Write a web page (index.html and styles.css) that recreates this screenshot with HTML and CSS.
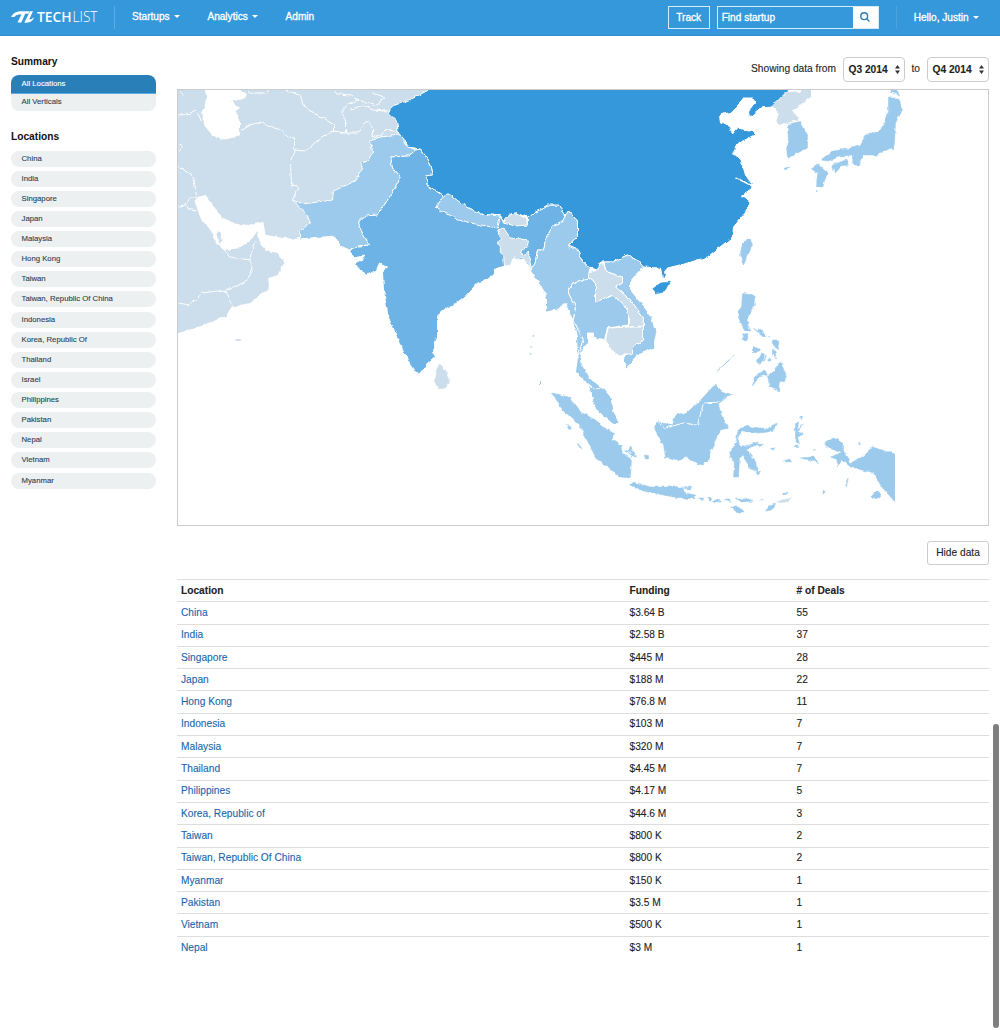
FILE: index.html
```html
<!DOCTYPE html>
<html lang="en">
<head>
<meta charset="utf-8">
<title>TechList – Locations</title>
<link rel="stylesheet" href="styles.css">
</head>
<body>
<header class="navbar">
  <svg class="logo" width="88" height="22" viewBox="0 -3 88 22">
    <path d="M0 8C2.500 3.500 5.500 2.200 11 2.200H18.500L17.300 4.800H14.200L10.300 13.500H6.500L10.500 5.200C6.500 5.200 4.500 6.200 3.500 8ZM19 2.200H22L18.300 10.300C20.200 10.200 21.800 9.500 23.200 8.200C21.500 12.500 18.500 13.800 13.300 13.800Z"/>
    <text class="logo-bold" x="26" y="12.700" textLength="34.500" lengthAdjust="spacingAndGlyphs">TECH</text>
    <text class="logo-light" x="61.500" y="12.700" textLength="25" lengthAdjust="spacingAndGlyphs">LIST</text>
  </svg>
  <nav class="menu">
    <a>Startups <i class="caret"></i></a>
    <a>Analytics <i class="caret"></i></a>
    <a>Admin</a>
  </nav>
  <a class="track">Track</a>
  <div class="search">
    <span class="search-field">Find startup</span>
    <span class="search-button"><svg width="10" height="10" viewBox="0 0 10 10"><circle cx="4.200" cy="4.200" r="3.400"/><path d="M6.600 6.600L9.400 9.400"/></svg></span>
  </div>
  <a class="user">Hello, Justin <i class="caret"></i></a>
</header>

<div class="page">
  <aside class="sidebar">
    <h2>Summary</h2>
    <ul class="summary">
      <li class="active">All Locations</li>
      <li>All Verticals</li>
    </ul>
    <h2>Locations</h2>
    <ul class="locations">
      <li>China</li><li>India</li><li>Singapore</li><li>Japan</li><li>Malaysia</li><li>Hong Kong</li><li>Taiwan</li><li>Taiwan, Republic Of China</li><li>Indonesia</li><li>Korea, Republic Of</li><li>Thailand</li><li>Israel</li><li>Philippines</li><li>Pakistan</li><li>Nepal</li><li>Vietnam</li><li>Myanmar</li>
    </ul>
  </aside>

  <main class="content">
    <div class="range">
      <span>Showing data from</span>
      <span class="select">Q3 2014 <svg width="5" height="9" viewBox="0 0 5 9"><path d="M2.500 0L5 3.500H0ZM2.500 9L5 5.500H0Z"/></svg></span>
      <span>to</span>
      <span class="select">Q4 2014 <svg width="5" height="9" viewBox="0 0 5 9"><path d="M2.500 0L5 3.500H0ZM2.500 9L5 5.500H0Z"/></svg></span>
    </div>

    <div class="map">
      <svg width="810" height="435" viewBox="178 90 810 435">
        <defs>
          <filter id="coast" filterUnits="userSpaceOnUse" x="160" y="70" width="840" height="470" color-interpolation-filters="sRGB">
            <feTurbulence type="fractalNoise" baseFrequency="0.18" numOctaves="2" seed="4" result="n"/>
            <feDisplacementMap in="SourceGraphic" in2="n" scale="4" xChannelSelector="R" yChannelSelector="G"/>
            <feGaussianBlur stdDeviation="0.3"/>
          </filter>
          <clipPath id="extent"><path d="M178 90H895V525H178Z M895 90H910V440H895Z"/></clipPath>
        </defs>
        <g clip-path="url(#extent)"><g filter="url(#coast)" transform="translate(0.5 0)">
          <!-- central and western Asia -->
          <path class="none flat" d="M170 80H440L415 150L297 239L284 238L265 235L263 223L257 222L247 226L232 223L220 216L213 205L205 195L197 197L194 201L200 218L210 230L215 243L224 250L240 248L252 238L257 231L259 243L265 250L277 253L284 262L277 275L269 278L268 288L257 296L249 303L232 307L226 316L200 326L192 329L178 333H170Z"/>
          <path class="water" d="M204 85L207 100L202 111L204 125L212 135L224 139L239 136L239 120L235 111L238 109L231 101L236 100L244 98L246 94L240 91V85Z"/>
          <path class="water" d="M212 232L217 231L219 236L217 243L213 237Z"/>
          <path class="none flat" d="M216 233L220 232L221 240L218 244Z"/>
          <path class="border" d="M292 200L298 186L291 185L290 161L294 150L294 138L289 137L280 130L260 122L250 125L240 131M294 150L305 151L320 138L334 131L345 133L357 133L367 121L372 128L372 138L387 130L400 132M285 90L299 95L305 108L334 125V131M345 133V120L341 112L350 103L357 100L377 105L384 97L372 93M335 90L337 94L350 95L357 100M350 110L364 106L372 110L388 111M178 116L190 113L195 110L202 121M179 92L183 96M248 90L249 93H266L268 90M178 166L192 176L197 196M178 206L185 205L190 197L197 197M185 205L187 209L196 211M224 250L229 257L249 260L252 248L255 240M249 260L252 265L247 281L225 290L202 293L189 305L178 303M225 290L232 307M178 145L182 147L178 152"/>

          <path class="low" d="M292 200L302 204L332 200L333 191L344 186L355 181L362 168L360 163L368 161L372 151L370 141L379 137L400 135L405 145L415 150L408 156L390 157L392 168L400 178L393 191L383 206L377 215L364 216L357 223L362 233L369 245L357 246L349 250L340 246L334 236L299 239L299 231L310 223L305 213Z"/>
          <path class="mid" d="M415 150L420 149L428 160L432 175L425 176L427 185L443 196L463 205L480 214L500 216L503 223L527 225L527 217L547 205L558 205L565 215L563 221L552 226L545 240L543 250L537 250L535 261L531 270L523 260L513 258L505 266L497 268L487 280L477 283L465 296L452 306L443 310L437 316L437 336L433 348L434 357L427 363L422 370L417 373L412 370L408 360L398 342L387 313L383 290L382 272L387 268L379 263L376 270L367 275L359 270L354 263L362 260L364 256L354 258L349 251L357 246L369 245L362 233L357 223L364 216L377 215L383 206L393 191L400 178L392 168L390 157L408 156Z"/>
          <path class="high" d="M430 80L428 90L413 98L403 102L392 106L388 113L396 121L398 133L405 141L407 147L420 149L428 160L432 175L425 176L427 185L443 196L463 205L480 214L500 216L504 221L508 215L515 213L527 217L547 205L558 205L565 215L568 211L577 221L577 235L568 246L577 250L582 261L589 268L597 270L602 262L612 262L627 255L637 260L642 267L660 268L662 278L665 275L664 272L667 268L687 263L707 257L722 245L732 237L733 227L743 215L750 202L742 195L750 191L752 185L745 175L740 158L732 154L738 143L755 135L755 131L737 128L732 134L728 125L720 122L719 115L732 112L743 98L753 98L754 102L748 112L749 117L760 108L772 107L788 92V80Z"/>
          <path class="water-line" d="M735 178L742 181L752 186M741 197L751 193"/>
          <path class="high isle" d="M652 289L660 283L669 282L664 292L655 294Z"/>
          <path class="none" d="M788 90L800 92V80H811V97L793 110L799 120L788 123L780 126L775 122L778 113L771 107Z"/>
          <path class="low isle" d="M788 124L800 121.500L807 135L807 148L797 153L787 158L786 148L788 138L787 128ZM784 168L789 167L788 169.500H784Z"/>
          <path class="low isle" d="M821 160L833 151L852 148L860 145L865 135L880 130L888 113L888 98L898 98L902 110L895 123L894 142L893 150L890 148L878 155L863 155L857 166L852 163L853 155L840 156L828 161ZM832 165L845 160L848 165L840 166L834 173ZM811 169L818 164L827 172L822 187L816 186L817 173ZM889 92L891 89L896 91L899 95Z"/>
          <path class="low isle" d="M750 239L752 245L743 265L739 255L743 243Z"/>

          <path class="low" d="M445 195L450 195L463 205L480 214L500 216L497 228L480 225L458 220L436 208L440 200Z"/>
          <path class="none" d="M503 223L508 215L515 213L526 219L527 225L514 226Z"/>
          <path class="none" d="M497 230L503 228L510 238L528 240L527 246L520 251L523 256L528 251L531 271L525 261L521 257L515 261L514 255L510 265L504 266L503 255L497 243L501 239Z"/>
          <path class="low" d="M568 211L577 221L577 235L568 246L577 250L582 261L589 268L588 278L572 283L568 293L575 307L573 320L583 340L577 357L576 337L572 320L565 302L557 310L545 312L545 295L540 285L530 271L535 261L537 250L543 250L545 240L552 226L563 221L565 215Z"/>
          <path class="low" d="M602 262L612 262L627 255L637 260L643 267L637 273L630 281L630 290L650 315L656 333L653 348L638 355L625 369L623 357L632 348L643 340V325L643 318L630 300L615 287L622 283L622 277L607 272Z"/>
          <path class="low" d="M588 278L595 283L595 302L612 295L622 303L628 313V325L607 328L604 340L593 337V333L587 333L587 343L580 353L582 365L588 377L602 388L600 392L595 392L587 383L575 372L577 357L583 340L573 320L575 307L568 293L572 283Z"/>
          <path class="none" d="M588 273L597 270L600 262L607 272L622 277L622 283L615 287L630 300L643 318L642 326L628 327V313L622 303L612 295L595 302V283L588 278Z"/>
          <path class="none" d="M608 328L628 327L643 327V340L632 348V353L620 356L612 352L605 340Z"/>
          <path class="low" d="M588 384L595 390L602 387L612 399L613 411L619 424L611 423L595 409L590 393Z"/>
          <path class="none isle" d="M439 364L445 370L449 382L445 388L438 389L435 382L436 370Z"/>

          <!-- Indonesia, Borneo, Sulawesi and Papua -->
          <path class="low isle" d="M552 393L568 397L580 412L595 420L607 430L613 433L612 440L620 445L622 453L631 458L630 478L620 477L595 457L580 427L560 407ZM630 485L633 482L650 487L667 487L669 485L682 488L685 493L695 495L694 499L673 497L643 491ZM624 451L628 451L630 447L636 456L631 456ZM566 423L571 429L568 429ZM577 443L581 448L578 447ZM644 455L648 455.500V458L645 458Z"/>
          <path class="low isle" d="M657 422L672 425L675 415L687 412L698 402L703 397L715 384L720 390L732 395L723 399L718 405L722 418L728 428L720 430L710 450L708 462L698 465L687 457L677 460L665 457L663 445L657 435L654 427Z"/>
          <path class="border" d="M656 422L665 428L683 423L697 425L703 403L720 402M622 453L631 453"/>
          <path class="low isle" d="M743 426L768 429L776 423L772 431.500L758 433L742 431L738 436L737 442L742 447L758 442L756 445L745 449L755 462L757 470L748 467L743 455L739 458L738 477L733 477L734 462L729 458L732 447L736 441L737 432Z"/>
          <path class="low isle" d="M823 444L833 438L843 443V452L850 463L860 458L872 447L900 456V508L882 488L873 473L850 467L842 460L837 466L835 459L830 457L841 453L831 449ZM871 497L875 491L881 493L877 498Z"/>
          <path class="low isle" d="M783 461L789 459L791 462L786 463ZM799 458L813 457L818 462.500L809 460ZM795 423L798 422L797 430L803 425L798 432L803 434L797 437L799 444L795 440ZM799 417L802 416L801 420ZM824 490L825 492L822 494ZM845 484L848 478L846 486ZM698 498L703 498L702 500ZM707 498L711 499L710 502ZM713 501L717 499L721 502L714 503ZM736 499L748 499L753 501L740 502ZM730 507L738 507L743 512L738 512ZM765 511L769 506L775 504L771 510ZM756 444L763 444.500L760 447ZM755 470L760 471L757 475ZM682 488L691 487L690 489ZM724 499L729 499L730 501.500ZM770 448L774 448.500V450L771 449.500ZM812 449L815 449.500L813 450.500ZM793 446H798V447.500H794ZM782 493L787 493.500L783 495ZM857 442L860 443.500L858 444ZM760 500L763 499.500L762 501Z"/>
          <path class="none isle" d="M776 503L781 500L791 498.500L785 502Z"/>

          <!-- Philippines -->
          <path class="low isle" d="M742 293.500L753 295L755 305L748 315L747 325L751 331L743 329L739 320L737 312L741 307ZM741 333L747 335L747.500 341L743 339ZM753 328L757 331L760 329L766 337L759 334ZM753 346L760 350L753 354ZM761 353L764 354L762 360L760 365L756 362ZM765 355L763 362L766 357ZM771 341L778 341L779 350L774 347ZM772 349L774 351L776 358L772 355ZM767 361L771 358L770 361ZM767 376L774 371L780 362L783 370L786 377L785 383L780 380L779 391L769 386ZM752 386L754 377L764 370L767 375L758 377Z"/>
          <path class="chain" d="M717 371L734 355"/>
          <path class="chain" stroke-dasharray="2 4" d="M533 335L530 356M817 185L816 195M768 335L772 340M540 382V384"/>
        </g></g>
        <path class="none flat" d="M235 339L242 339.500L240 341H236Z"/>
      </svg>
    </div>

    <div class="actions"><a class="button">Hide data</a></div>

    <table class="deals">
      <thead><tr><th class="c1">Location</th><th class="c2">Funding</th><th># of Deals</th></tr></thead>
      <tbody>
        <tr><td><a>China</a></td><td>$3.64 B</td><td>55</td></tr>
        <tr><td><a>India</a></td><td>$2.58 B</td><td>37</td></tr>
        <tr><td><a>Singapore</a></td><td>$445 M</td><td>28</td></tr>
        <tr><td><a>Japan</a></td><td>$188 M</td><td>22</td></tr>
        <tr><td><a>Hong Kong</a></td><td>$76.8 M</td><td>11</td></tr>
        <tr><td><a>Indonesia</a></td><td>$103 M</td><td>7</td></tr>
        <tr><td><a>Malaysia</a></td><td>$320 M</td><td>7</td></tr>
        <tr><td><a>Thailand</a></td><td>$4.45 M</td><td>7</td></tr>
        <tr><td><a>Philippines</a></td><td>$4.17 M</td><td>5</td></tr>
        <tr><td><a>Korea, Republic of</a></td><td>$44.6 M</td><td>3</td></tr>
        <tr><td><a>Taiwan</a></td><td>$800 K</td><td>2</td></tr>
        <tr><td><a>Taiwan, Republic Of China</a></td><td>$800 K</td><td>2</td></tr>
        <tr><td><a>Myanmar</a></td><td>$150 K</td><td>1</td></tr>
        <tr><td><a>Pakistan</a></td><td>$3.5 M</td><td>1</td></tr>
        <tr><td><a>Vietnam</a></td><td>$500 K</td><td>1</td></tr>
        <tr><td><a>Nepal</a></td><td>$3 M</td><td>1</td></tr>
      </tbody>
    </table>
  </main>
</div>
<div class="scroll-thumb"></div>
</body>
</html>
```
FILE: styles.css
```css
* { box-sizing: border-box; }
body {
  margin: 0;
  height: 1030px;
  overflow: hidden;
  position: relative;
  background: #fff;
  color: #222;
  font: 10.2px/14px "Liberation Sans", Arial, sans-serif;
}
ul { list-style: none; margin: 0; padding: 0; }

/* top bar */
.navbar {
  display: flex;
  align-items: center;
  height: 36px;
  padding: 0 21px 1px 11px;
  background: #3498db;
  border-bottom: 1px solid #2f8fd0;
  color: #fff;
  font-size: 10.1px;
  -webkit-text-stroke: 0.3px #fff;
}
.logo { fill: #fff; overflow: visible; -webkit-text-stroke: 0; }
.logo-bold, .logo-light { font-family: "Open Sans", sans-serif; font-size: 14px; }
.logo-bold { font-weight: 600; }
.logo-light { font-weight: 300; }
.menu {
  display: flex;
  align-items: center;
  gap: 27.5px;
  height: 23px;
  margin-left: 15px;
  padding-left: 17px;
  border-left: 1px solid #5dade2;
}
.caret {
  display: inline-block;
  margin-left: 1.5px;
  vertical-align: 2px;
  border: 3px solid transparent;
  border-top: 3px solid #fff;
  border-bottom: 0;
}
.track {
  margin-left: auto;
  width: 42px;
  height: 23px;
  border: 1px solid #d6eaf8;
  line-height: 22px;
  text-align: center;
}
.search {
  display: flex;
  width: 162px;
  height: 23px;
  margin: 0 17px 0 7px;
  border: 1px solid #d6eaf8;
}
.search-field { flex: 1; padding-left: 4px; line-height: 21px; }
.search-button { display: flex; align-items: center; justify-content: center; width: 25px; background: #fff; }
.search-button svg { fill: none; stroke: #2980b9; stroke-width: 1.4; }
.user { padding-left: 17px; border-left: 1px solid #4aa3df; line-height: 23px; }

/* layout */
.page { display: flex; }
.sidebar { width: 177px; padding: 19px 21px 0 11px; color: #2c3e50; font-size: 7.75px; }
.sidebar h2 { margin: 0 0 6px; font-size: 10.2px; line-height: 14px; color: #111; }
.sidebar li { padding-left: 10.5px; background: #ecf0f1; -webkit-text-stroke: 0.1px; }
.summary { margin-bottom: 19px; border-radius: 8px; overflow: hidden; }
.summary li { height: 17px; line-height: 16px; }
.summary li.active { height: 18.5px; line-height: 18px; background: #2980b9; border-bottom: 1px solid #5dade2; color: #fff; }
.locations { display: grid; gap: 4.13px; padding-top: 1px; }
.locations li { height: 16px; line-height: 15.5px; border-radius: 8px; }
.content { width: 812px; padding-top: 21px; -webkit-text-stroke: 0.1px; }

.range { display: flex; justify-content: flex-end; align-items: center; gap: 6.5px; height: 25px; }
.range > span:not(.select) { position: relative; top: -1px; }
.select {
  display: flex;
  align-items: center;
  justify-content: space-between;
  width: 62.500px;
  height: 25px;
  padding: 0 4px 0 5px;
  border: 1px solid #ccc;
  border-radius: 4px;
  font-weight: bold;
}
.select svg { fill: #333; }

/* map */
.map { height: 437px; margin-top: 7px; border: 1px solid #ccc; overflow: hidden; }
.map svg { display: block; }
.map path { stroke: #fff; stroke-width: 1; stroke-linejoin: round; }
.map .none { fill: #ccddec; }
.map .low { fill: #9bcaec; }
.map .mid { fill: #6eb3e5; }
.map .high { fill: #3498db; }
.map .flat { stroke: none; }
.map .isle { stroke-width: 0.5; }
.map .low.isle { stroke: #9bcaec; }
.map .high.isle { stroke: #3498db; }
.map .none.isle { stroke: #ccddec; }
.map .water { fill: #fff; }
.map .border { fill: none; }
.map .water-line { fill: none; stroke-width: 1.500; }
.map .chain { fill: none; stroke: #9bcaec; }

.actions { display: flex; justify-content: flex-end; margin: 14.5px 0 14px; }
.button {
  width: 62px;
  height: 24.5px;
  border: 1px solid #ccc;
  border-radius: 3px;
  line-height: 22px;
  text-align: center;
}

/* table */
.deals { width: 812px; border-collapse: collapse; table-layout: fixed; }
.deals tr { height: 22.3px; }
.deals th, .deals td { padding: 0 4px 0 4px; border-top: 1px solid #ddd; text-align: left; line-height: 14px; }
.deals th { color: #222; }
.deals .c1 { width: 448.500px; }
.deals .c2 { width: 167px; }
.deals a { color: #1766ab; }

.scroll-thumb {
  position: absolute;
  right: 1px;
  top: 724px;
  width: 6px;
  height: 304px;
  border-radius: 3px;
  background: #7f7f7f;
}
```
